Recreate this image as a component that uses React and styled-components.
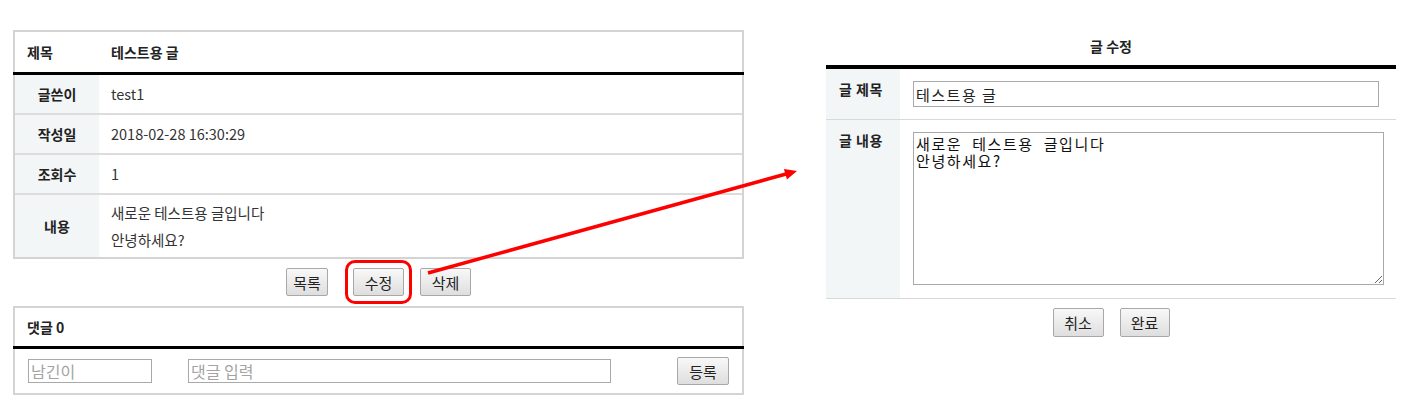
import React from 'react';
import styled, { createGlobalStyle } from 'styled-components';

const GlobalStyle = createGlobalStyle`
  html, body {
    margin: 0;
    padding: 0;
    background: #fff;
  }

  body {
    font-family: 'Noto Sans CJK KR', 'Noto Sans', sans-serif;
    color: #222;
  }

  * {
    box-sizing: border-box;
  }
`;

const StyledPage = styled.div`
  position: relative;
  display: flex;
  align-items: flex-start;
  gap: 82px;
  width: 1413px;
  height: 413px;
  padding: 30px 0 0 13px;
  overflow: hidden;
`;

const LeftColumn = styled.div`
  width: 731px;
`;

const Panel = styled.div`
  border: 2px solid #d4d4d4;
  background: #fff;
`;

const HeaderRow = styled.div`
  display: flex;
  align-items: center;
  height: ${({ $h }) => $h || 40}px;
  font-size: 14px;
  font-weight: bold;
  color: #222;

  span:first-child {
    width: 84px;
    padding-left: 12px;
  }

  span + span {
    padding-left: 12px;
  }
`;

const Rule = styled.div`
  height: ${({ $h }) => $h || 3}px;
  background: #000;
  margin: ${({ $bleed }) => ($bleed ? '0 -2px' : '0')};
`;

const Row = styled.div`
  display: flex;
  height: ${({ $h, $divided }) => ($h || 38) + ($divided ? 2 : 0)}px;
  border-top: ${({ $divided }) => ($divided ? '2px solid #dcdcdc' : 'none')};
`;

const Label = styled.div`
  flex: none;
  width: 84px;
  display: flex;
  align-items: center;
  justify-content: center;
  background: #f3f6f7;
  font-size: 14px;
  font-weight: bold;
  color: #222;
`;

const Value = styled.div`
  flex: 1;
  display: flex;
  flex-direction: column;
  justify-content: center;
  padding: 0 12px;
  font-size: 14.5px;
  line-height: ${({ $lh }) => $lh || 18}px;
  color: #333;
`;

const ButtonBar = styled.div`
  display: flex;
  justify-content: center;
  gap: 16px;
  padding: ${({ $pad }) => $pad};
`;

const Button = styled.button`
  width: ${({ $w }) => $w}px;
  height: ${({ $h }) => $h || 28}px;
  padding: 0;
  border: 1px solid #a8a8a8;
  border-radius: 2px;
  background: linear-gradient(#f8f8f8, #dedede);
  font-family: inherit;
  font-size: 15px;
  color: #222;
  cursor: pointer;
  margin-left: ${({ $marked }) => ($marked ? 9 : 0)}px;
  outline: ${({ $marked }) => ($marked ? '3px solid #f00' : 'none')};
  outline-offset: 5px;
`;

const CommentForm = styled.div`
  display: flex;
  align-items: center;
  height: 44px;
  padding: 0 13px;
`;

const TextInput = styled.input`
  width: ${({ $w }) => $w}px;
  height: ${({ $h }) => $h || 24}px;
  margin-right: ${({ $mr }) => $mr || 0}px;
  padding: 0 2px;
  border: 1px solid #a9a9a9;
  font-family: inherit;
  font-size: ${({ $fs }) => $fs || 15}px;
  letter-spacing: ${({ $ls }) => $ls || 0}px;
  color: #222;

  &::placeholder {
    color: #a4a4a4;
  }
`;

const Spacer = styled.div`
  flex: 1;
`;

const RightColumn = styled.div`
  width: 570px;
`;

const EditTitle = styled.div`
  height: 35px;
  line-height: 32px;
  text-align: center;
  font-size: 14px;
  font-weight: bold;
  color: #222;
`;

const EditRow = styled.div`
  display: flex;
  border-bottom: 1px solid #d9d9d9;
`;

const EditLabel = styled.div`
  flex: none;
  width: 74px;
  padding: 11px 0 0 13px;
  background: #f3f6f7;
  font-size: 14px;
  font-weight: bold;
  line-height: 18px;
  letter-spacing: 0.5px;
  color: #222;
`;

const EditValue = styled.div`
  flex: 1;
  padding: 12px 13px ${({ $pb }) => $pb || 12}px;
`;

const TextArea = styled.textarea`
  display: block;
  width: 471px;
  height: 153px;
  padding: 2px 2px;
  border: 1px solid #a9a9a9;
  font-family: inherit;
  font-size: 15px;
  line-height: 17px;
  letter-spacing: 1.6px;
  word-spacing: 5px;
  color: #111;
  resize: both;
`;

const Annotation = styled.svg`
  position: absolute;
  left: 0;
  top: 0;
  width: 1413px;
  height: 413px;
  pointer-events: none;
`;

const App = () => {
  const rows = [
    { label: '글쓴이', value: 'test1' },
    { label: '작성일', value: '2018-02-28 16:30:29' },
    { label: '조회수', value: '1' },
  ];

  return (
    <>
      <GlobalStyle />
      <StyledPage>
        <LeftColumn>
          <Panel>
            <HeaderRow>
              <span>제목</span>
              <span>테스트용 글</span>
            </HeaderRow>
            <Rule $bleed />
            {rows.map((row, i) => (
              <Row key={row.label} $divided={i > 0}>
                <Label>{row.label}</Label>
                <Value>{row.value}</Value>
              </Row>
            ))}
            <Row $h={62} $divided>
              <Label>내용</Label>
              <Value $lh={27}>
                <div>새로운 테스트용 글입니다</div>
                <div>안녕하세요?</div>
              </Value>
            </Row>
          </Panel>

          <ButtonBar $pad="9px 0 10px">
            <Button $w={42}>목록</Button>
            <Button $w={51} $marked>
              수정
            </Button>
            <Button $w={51}>삭제</Button>
          </ButtonBar>

          <Panel>
            <HeaderRow $h={38}>
              <span>댓글 0</span>
            </HeaderRow>
            <Rule $bleed />
            <CommentForm>
              <TextInput $w={124} $mr={36} $fs={16} placeholder="남긴이" />
              <TextInput $w={423} $fs={16} placeholder="댓글 입력" />
              <Spacer />
              <Button $w={52}>등록</Button>
            </CommentForm>
          </Panel>
        </LeftColumn>

        <RightColumn>
          <EditTitle>글 수정</EditTitle>
          <Rule $h={4} />
          <EditRow>
            <EditLabel>글 제목</EditLabel>
            <EditValue>
              <TextInput $w={466} $h={26} $ls={1.5} defaultValue="테스트용 글" />
            </EditValue>
          </EditRow>
          <EditRow>
            <EditLabel>글 내용</EditLabel>
            <EditValue $pb={13}>
              <TextArea defaultValue={'새로운 테스트용 글입니다\n안녕하세요?'} />
            </EditValue>
          </EditRow>
          <ButtonBar $pad="9px 0 0">
            <Button $w={51} $h={29}>
              취소
            </Button>
            <Button $w={50} $h={29}>
              완료
            </Button>
          </ButtonBar>
        </RightColumn>

        <Annotation viewBox="0 0 1413 413">
          <line x1="428" y1="273" x2="786" y2="174" stroke="#f00" strokeWidth="3.5" />
          <polygon points="797,171 783.9,168.9 786.9,179.5" fill="#f00" />
        </Annotation>
      </StyledPage>
    </>
  );
};

export default App;
